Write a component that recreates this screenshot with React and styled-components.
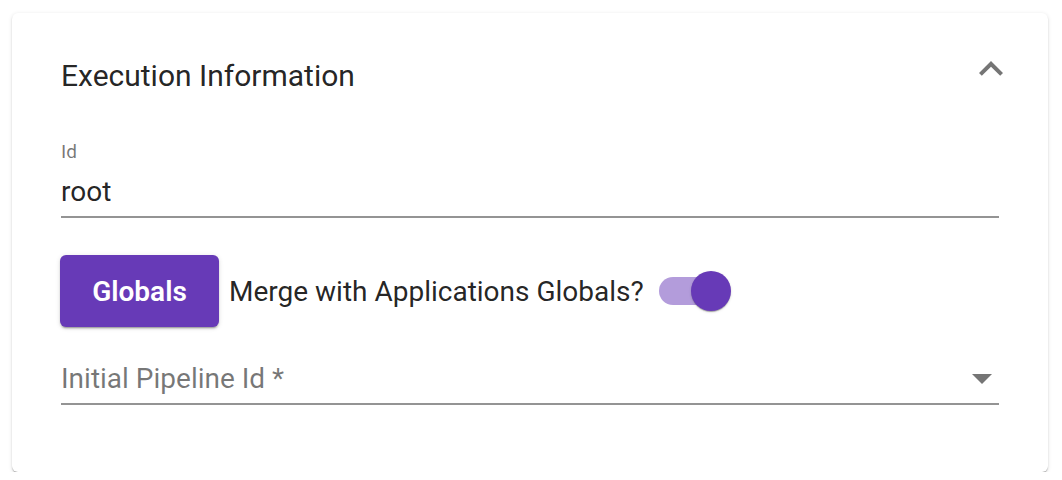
import React from "react";
import styled, { createGlobalStyle } from "styled-components";

const GlobalStyle = createGlobalStyle`
  body {
    margin: 0;
    padding: 13px 14px 0 12px;
    background: #ffffff;
    font-family: Roboto, "Noto Sans", sans-serif;
  }
`;

export default function App() {
  return (
    <>
      <GlobalStyle />
      <Card>
        <Header>
          <Title>Execution Information</Title>
          <ChevronIcon viewBox="0 0 24 24">
            <path d="M12 8l-6 6 1.41 1.41L12 10.83l4.59 4.58L18 14z" />
          </ChevronIcon>
        </Header>
        <Body>
          <Field>
            <SmallLabel>Id</SmallLabel>
            <InputValue>root</InputValue>
          </Field>
          <GlobalsRow>
            <GlobalsButton>Globals</GlobalsButton>
            <MergeText>Merge with Applications Globals?</MergeText>
            <Switch>
              <Track />
              <Thumb />
            </Switch>
          </GlobalsRow>
          <SelectField>
            <Placeholder>Initial Pipeline Id *</Placeholder>
            <ArrowIcon viewBox="0 0 24 24">
              <path d="M7 10l5 5 5-5z" />
            </ArrowIcon>
          </SelectField>
        </Body>
      </Card>
    </>
  );
}

const Card = styled.div`
  background: #fff;
  border-radius: 6px;
  height: 459px;
  box-sizing: border-box;
  box-shadow: 0px 2px 2px -1px rgba(0, 0, 0, 0.25),
    0px 1px 1px 0px rgba(0, 0, 0, 0.14), 0px 1px 4px 0px rgba(0, 0, 0, 0.12);
  padding: 0 49px;
`;

const Header = styled.div`
  display: flex;
  align-items: center;
  justify-content: space-between;
  height: 112px;
`;

const Title = styled.div`
  font-size: 30px;
  color: rgba(0, 0, 0, 0.87);
  line-height: 36px;
  margin-top: 14px;
`;

const ChevronIcon = styled.svg`
  width: 48px;
  height: 48px;
  fill: #757575;
  margin-right: -16px;
`;

const Body = styled.div`
  display: flex;
  flex-direction: column;
`;

const Field = styled.div`
  display: flex;
  flex-direction: column;
  border-bottom: 2px solid #949494;
  height: 78px;
  box-sizing: border-box;
  margin-top: 15px;
`;

const SmallLabel = styled.div`
  font-size: 19px;
  line-height: 24px;
  color: rgba(0, 0, 0, 0.54);
`;

const InputValue = styled.div`
  font-size: 28px;
  line-height: 36px;
  color: rgba(0, 0, 0, 0.87);
  margin-top: 10px;
`;

const GlobalsRow = styled.div`
  display: flex;
  align-items: center;
  margin-top: 37px;
`;

const GlobalsButton = styled.button`
  width: 159px;
  height: 72px;
  border: none;
  border-radius: 6px;
  background: #673ab7;
  color: #fff;
  font-family: Roboto, sans-serif;
  font-weight: 600;
  font-size: 28px;
  margin-left: -1px;
  padding: 0;
  box-shadow: 0px 3px 1px -2px rgba(0, 0, 0, 0.2),
    0px 2px 2px 0px rgba(0, 0, 0, 0.14), 0px 1px 5px 0px rgba(0, 0, 0, 0.12);
`;

const MergeText = styled.span`
  font-size: 28px;
  color: rgba(0, 0, 0, 0.87);
  margin-left: 10px;
`;

const Switch = styled.div`
  position: relative;
  width: 74px;
  height: 40px;
  margin-left: 15px;
  display: flex;
  align-items: center;
`;

const Track = styled.div`
  width: 71px;
  height: 28px;
  border-radius: 14px;
  background: #673ab7;
  opacity: 0.5;
`;

const Thumb = styled.div`
  position: absolute;
  top: 0;
  left: 32px;
  width: 40px;
  height: 40px;
  border-radius: 50%;
  background: #673ab7;
  box-shadow: 0px 2px 1px -1px rgba(0, 0, 0, 0.2),
    0px 1px 1px 0px rgba(0, 0, 0, 0.14), 0px 1px 3px 0px rgba(0, 0, 0, 0.12);
`;

const SelectField = styled.div`
  display: flex;
  align-items: center;
  justify-content: space-between;
  border-bottom: 2px solid #949494;
  height: 58px;
  padding-top: 6px;
  box-sizing: border-box;
  margin-top: 20px;
`;

const Placeholder = styled.span`
  font-size: 28px;
  color: rgba(0, 0, 0, 0.54);
`;

const ArrowIcon = styled.svg`
  width: 48px;
  height: 48px;
  fill: #757575;
  margin-right: -7px;
`;
